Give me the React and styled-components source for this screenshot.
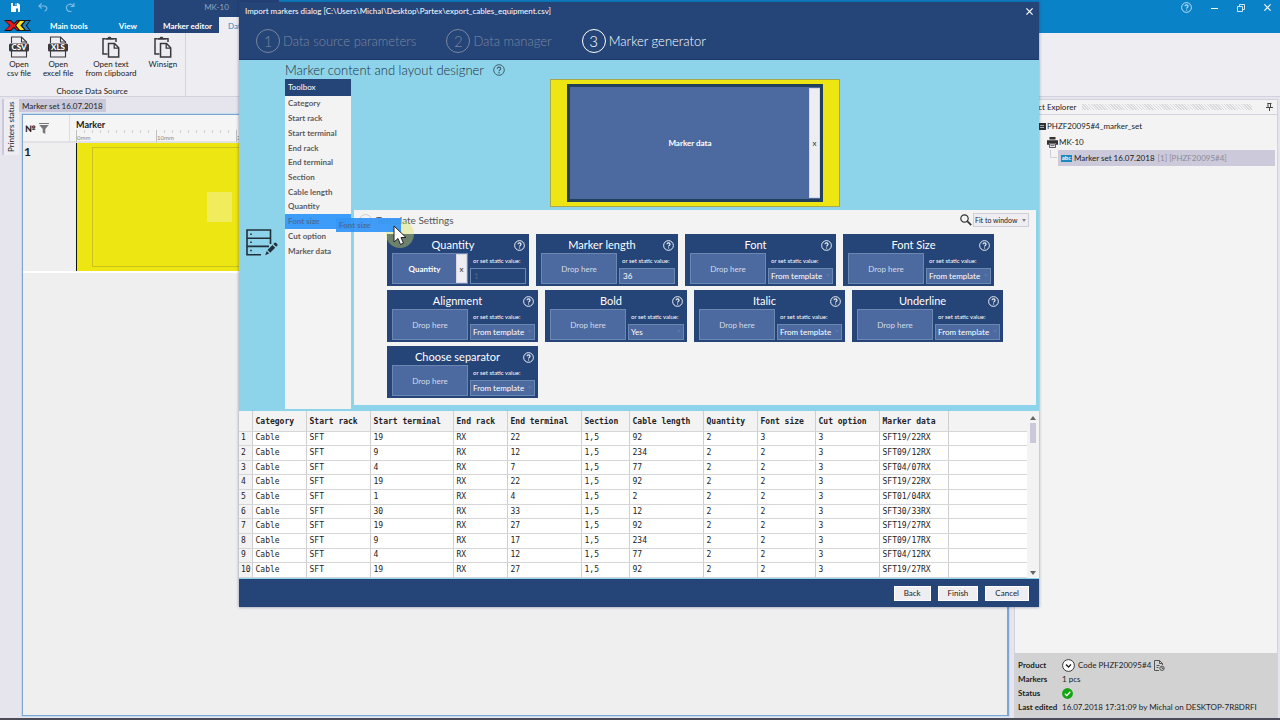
import React, { useState } from 'react';
import styled, { createGlobalStyle, css } from 'styled-components';

const TOOLBOX = [
    'Category', 'Start rack', 'Start terminal', 'End rack', 'End terminal', 'Section',
    'Cable length', 'Quantity', 'Font size', 'Cut option', 'Marker data',
];

const SETTINGS = [
    { title: 'Quantity', dropped: 'Quantity', input: '1', disabled: true },
    { title: 'Marker length', input: '36' },
    { title: 'Font', option: 'From template' },
    { title: 'Font Size', option: 'From template' },
    { title: 'Alignment', option: 'From template' },
    { title: 'Bold', option: 'Yes', narrow: true },
    { title: 'Italic', option: 'From template' },
    { title: 'Underline', option: 'From template' },
    { title: 'Choose separator', option: 'From template' },
];

const COLUMNS = [
    ['Category', 54], ['Start rack', 64], ['Start terminal', 83], ['End rack', 54],
    ['End terminal', 74], ['Section', 48], ['Cable length', 74], ['Quantity', 54],
    ['Font size', 58], ['Cut option', 64], ['Marker data', 69],
];

const ROWS = [
    ['Cable', 'SFT', '19', 'RX', '22', '1,5', '92', '2', '3', '3', 'SFT19/22RX'],
    ['Cable', 'SFT', '9', 'RX', '12', '1,5', '234', '2', '2', '3', 'SFT09/12RX'],
    ['Cable', 'SFT', '4', 'RX', '7', '1,5', '77', '2', '2', '3', 'SFT04/07RX'],
    ['Cable', 'SFT', '19', 'RX', '22', '1,5', '92', '2', '2', '3', 'SFT19/22RX'],
    ['Cable', 'SFT', '1', 'RX', '4', '1,5', '2', '2', '2', '3', 'SFT01/04RX'],
    ['Cable', 'SFT', '30', 'RX', '33', '1,5', '12', '2', '2', '3', 'SFT30/33RX'],
    ['Cable', 'SFT', '19', 'RX', '27', '1,5', '92', '2', '2', '3', 'SFT19/27RX'],
    ['Cable', 'SFT', '9', 'RX', '17', '1,5', '234', '2', '2', '3', 'SFT09/17RX'],
    ['Cable', 'SFT', '4', 'RX', '12', '1,5', '77', '2', '2', '3', 'SFT04/12RX'],
    ['Cable', 'SFT', '19', 'RX', '27', '1,5', '92', '2', '2', '3', 'SFT19/27RX'],
];

// ---------- ICONS ----------

const FileIcon = ({ text }) => (
    <svg width="20" height="22" viewBox="0 0 20 22" fill="none" stroke="#3a3a3e">
        <path d="M2.500 7V1h10l5 5v1M2.500 15v6h15v-6" strokeWidth="1.100" />
        <path d="M12.500 1v5h5" strokeWidth="1.100" />
        <rect x="0" y="7.500" width="20" height="8" rx="1.500" fill="#3a3a3e" stroke="none" />
        <text x="10" y="14.400" textAnchor="middle" fontSize="8" fontWeight="900" fill="#fff" stroke="none">{ text }</text>
    </svg>
);

const ClipboardIcon = () => (
    <svg width="20" height="22" viewBox="0 0 20 22" fill="none" stroke="#3a3a3e">
        <path d="M6.500 18H2V2.800h2.500M12 2.800h3V6" strokeWidth="1.500" />
        <path d="M4.500 3.800V2h2.200c0-1.700 3.600-1.700 3.600 0h2.200v1.800z" fill="#3a3a3e" stroke="none" />
        <path d="M7.500 7.500h6l4.200 4.200v9.300H7.500z" strokeWidth="1.500" fill="#eeedf2" />
        <path d="M13.200 7.800v4.300h4.300" strokeWidth="1.300" />
    </svg>
);

const Logo = () => (
    <svg width="27" height="11" viewBox="0 0 27 11">
        <path d="M0 0h7l3 3 3-3h7l-6 5.500 6 5.500h-7l-3-3-3 3H0l5.500-5.500z" fill="#140a10" />
        <path d="M1.500 1h5l3.500 3.300L13.300 1H15l-4 4.500 4 4.500h-2l-3-3.300L6.700 10H1.500l5-4.500z" fill="#e3171d" />
        <path d="M15 0h7l-5 5.500 5 5.500h-7l-4-5.500z" fill="#181818" />
        <path d="M16 1h4.500l-4.200 4.500 4.200 4.500H16l-3.800-4.500z" fill="#ffe51a" />
        <path d="M21 0h6l-4 5.500 4 5.500h-6l-4.200-5.500z" fill="#181818" />
        <path d="M21.800 1h3.500l-3.600 4.500 3.600 4.500h-3.500L18.300 5.500z" fill="#2184c4" />
    </svg>
);

const SaveIcon = () => (
    <svg width="10" height="9" viewBox="0 0 10 9">
        <path d="M0 0h7l2 2v7H0z" fill="#fff" />
        <path d="M2 0h4v3H2zM5 5.500h2V9H5z" fill="#0a82c8" />
        <path d="M4.500 0.500h1v2h-1z" fill="#fff" />
    </svg>
);

const UndoIcon = ({ flip }) => (
    <svg width="10" height="9" viewBox="0 0 10 9" fill="none" stroke="#79bbe2" strokeWidth="1.200">
        { flip
            ? <path d="M6.500 8.300A3.700 3.700 0 1 1 8.500 3.200M8.900 0v3.500H5.400" />
            : <path d="M3.600 .4L1 3l2.600 2.600M1 3h5.200c3.400 0 3.400 5 .3 5" /> }
    </svg>
);

const HelpIcon = ({ size = 11, color = '#fff' }) => (
    <svg width={ size } height={ size } viewBox="0 0 12 12" fill="none" stroke={ color }>
        <circle cx="6" cy="6" r="5.300" strokeWidth="1" />
        <path d="M4.400 4.700c0-2.200 3.300-2.100 3.300 0 0 1.200-1.600 1.200-1.600 2.500" strokeWidth="1.200" />
        <path d="M6.100 8.100v1.300" strokeWidth="1.200" />
    </svg>
);

const CloseIcon = () => (
    <svg width="7" height="7" viewBox="0 0 7 7" stroke="#fff" strokeWidth="1.200">
        <path d="M.4.4l6.200 6.200M6.600.4L.4 6.600" />
    </svg>
);

const FilterIcon = () => (
    <svg width="10" height="11" viewBox="0 0 10 11" fill="#77777a">
        <path d="M0 0h10v1H0zM.3 2h9.400L6.300 6v5L3.700 9.500V6z" />
    </svg>
);

const DatabaseIcon = () => (
    <svg width="32" height="27" viewBox="0 0 32 27" fill="none" stroke="#22303a" strokeWidth="1.600">
        <path d="M15 25.700H1V1h23.500v14M1 9.200h23.500M1 17.400h22" />
        <path d="M5 4.500v1.400M5 12.500v1.400M5 20.800v1.400" />
        <path d="M21.500 21l5-5 2.700 2.700-5 5z" fill="#22303a" stroke="none" />
        <path d="M27.400 15l1.500-1.500c.6-.6 3.300 2 2.700 2.700L30.100 17.700z" fill="#22303a" stroke="none" />
        <path d="M20.700 22l2.400 2.400-3.900 1.800z" fill="#22303a" stroke="none" />
    </svg>
);

const PrinterIcon = () => (
    <svg width="11" height="11" viewBox="0 0 11 11" fill="#333">
        <path d="M2.500 0h6v2.500h-6zM0 3.200h11v4.600H9V6.500H2v1.300H0z" />
        <path d="M2.500 7h6v3.500h-6z" fill="#fff" stroke="#333" strokeWidth=".8" />
        <path d="M3.500 8.700h4" stroke="#333" strokeWidth=".8" />
    </svg>
);

// ---------- APP ----------

const SettingCard = ({ title, dropped, input, option, disabled, narrow }) => {
    const [value, setValue] = useState(input || '');
    const id = `static-${ title.toLowerCase().replace(' ', '-') }`;

    return (
        <Card $narrow={ narrow || input !== undefined }>
            <CardHead>
                <CardTitle>{ title }</CardTitle>
                <IconButton type="button" aria-label={ `Help: ${ title }` }><HelpIcon /></IconButton>
            </CardHead>
            <CardBody>
                <DropZone $filled={ !!dropped }>
                    <span>{ dropped || 'Drop here' }</span>
                    { dropped && <RemoveButton type="button" aria-label={ `Remove ${ dropped }` }>x</RemoveButton> }
                </DropZone>
                <Static>
                    <StaticLabel htmlFor={ id }>or set static value:</StaticLabel>
                    { option
                        ? (
                            <SelectWrap>
                                <StaticSelect id={ id } defaultValue={ option }><option>{ option }</option></StaticSelect>
                                <Arrow $color="#5b76a6" />
                            </SelectWrap>
                        )
                        : <StaticInput id={ id } value={ value } disabled={ disabled } onChange={ (e) => setValue(e.target.value) } /> }
                </Static>
            </CardBody>
        </Card>
    );
};

const ImportDialog = () => (
    <Dialog role="dialog" aria-label="Import markers dialog">
        <DialogTop>
            <DialogTitle>
                <span>Import markers dialog [C:\Users\Michal\Desktop\Partex\export_cables_equipment.csv]</span>
                <IconButton type="button" aria-label="Close dialog"><CloseIcon /></IconButton>
            </DialogTitle>
            <Steps>
                { ['Data source parameters', 'Data manager', 'Marker generator'].map((step, i) => (
                    <Step key={ step } $active={ i === 2 }><StepNumber>{ i + 1 }</StepNumber>{ step }</Step>
                )) }
            </Steps>
        </DialogTop>
        <DialogBody>
            <BodyTitle>Marker content and layout designer <HelpIcon size={ 12 } color="#3f6272" /></BodyTitle>
            <BodyIcon><DatabaseIcon /></BodyIcon>
            <Toolbox>
                <ToolboxTitle>Toolbox</ToolboxTitle>
                <ToolboxList>
                    { TOOLBOX.map((item) => <ToolboxItem key={ item } $selected={ item === 'Font size' }>{ item }</ToolboxItem>) }
                </ToolboxList>
            </Toolbox>
            <Designer>
                <Preview>
                    <PreviewField>
                        <span>Marker data</span>
                        <RemoveButton type="button" aria-label="Remove Marker data">x</RemoveButton>
                    </PreviewField>
                </Preview>
                <Panel>
                    <PanelHead>
                        <svg width="13" height="13" viewBox="0 0 13 13" fill="none" stroke="#ccc">
                            <circle cx="6.500" cy="6.500" r="6" /><path d="M4 7.500l2.500-2.500L9 7.500" />
                        </svg>
                        <PanelTitle>Template Settings</PanelTitle>
                        <svg width="12" height="12" viewBox="0 0 12 12" fill="none" stroke="#333" strokeWidth="1.200">
                            <circle cx="4.500" cy="4.500" r="3.700" /><path d="M7.200 7.200l4 4" strokeWidth="1.700" />
                        </svg>
                        <ZoomWrap>
                            <ZoomSelect aria-label="Zoom" defaultValue="Fit to window"><option>Fit to window</option></ZoomSelect>
                            <Arrow $color="#888" />
                        </ZoomWrap>
                    </PanelHead>
                    <Cards>
                        { SETTINGS.map((s) => <SettingCard key={ s.title } { ...s } />) }
                    </Cards>
                </Panel>
            </Designer>
            <Halo />
            <DragGhost>Font size</DragGhost>
            <Cursor width="14" height="21" viewBox="0 0 14 21">
                <path d="M1 1v16l4-3.500 2.500 6 3-1.300L8 12.500h5z" fill="#fff" stroke="#222" />
            </Cursor>
        </DialogBody>
        <GridArea>
            <Table>
                <colgroup>
                    <Col $width={ 13 } />
                    { COLUMNS.map(([name, width]) => <Col key={ name } $width={ width } />) }
                    <col />
                </colgroup>
                <thead>
                    <tr>
                        <Th />
                        { COLUMNS.map(([name]) => <Th key={ name }>{ name }</Th>) }
                        <Th />
                    </tr>
                </thead>
                <tbody>
                    { ROWS.map((row, i) => (
                        <tr key={ i }>
                            <RowNumber>{ i + 1 }</RowNumber>
                            { row.map((cell, j) => <Td key={ j }>{ cell }</Td>) }
                            <Td />
                        </tr>
                    )) }
                </tbody>
            </Table>
            <Scrollbar>
                <Arrow $up $color="#666" $static />
                <Thumb />
                <Arrow $color="#666" $static />
            </Scrollbar>
        </GridArea>
        <DialogFooter>
            <FooterButton type="button">Back</FooterButton>
            <FooterButton type="button">Finish</FooterButton>
            <FooterButton type="button">Cancel</FooterButton>
        </DialogFooter>
    </Dialog>
);

const App = () => (
    <Shell>
        <GlobalStyle />
        <TitleBar>
            <MainTabs>
                <QuickAccess><SaveIcon /><UndoIcon /><UndoIcon flip /></QuickAccess>
                <TabRow><Logo /><TabButton>Main tools</TabButton><TabButton>View</TabButton></TabRow>
            </MainTabs>
            <ContextTabs>
                <ContextName>MK-10</ContextName>
                <ContextRow><TabButton>Marker editor</TabButton><TabButton $active>Data</TabButton></ContextRow>
            </ContextTabs>
            <WindowButtons>
                <IconButton type="button" aria-label="Help"><HelpIcon color="#cfe8f7" /></IconButton>
                <IconButton type="button" aria-label="Minimize"><svg width="7" height="7" stroke="#fff"><path d="M0 4.500h7" /></svg></IconButton>
                <IconButton type="button" aria-label="Restore">
                    <svg width="8" height="8" fill="none" stroke="#cfe8f7"><path d="M.5 2.500h5v5h-5zM2.500 2V.5h5v5H6" /></svg>
                </IconButton>
                <IconButton type="button" aria-label="Close"><CloseIcon /></IconButton>
            </WindowButtons>
        </TitleBar>
        <Ribbon>
            <RibbonGroup>
                <RibbonButtons>
                    <RibbonButton><FileIcon text="CSV" />Open<br />csv file</RibbonButton>
                    <RibbonButton><FileIcon text="XLS" />Open<br />excel file</RibbonButton>
                    <RibbonButton><ClipboardIcon />Open text<br />from clipboard</RibbonButton>
                    <RibbonButton><ClipboardIcon />Winsign</RibbonButton>
                </RibbonButtons>
                <GroupName>Choose Data Source</GroupName>
            </RibbonGroup>
        </Ribbon>
        <Workspace>
            <SideStrip><SideTab>Printers status</SideTab></SideStrip>
            <DocumentArea>
                <DocumentTab>Marker set 16.07.2018</DocumentTab>
                <Document>
                    <DocHead>
                        <DocNumber>№ <FilterIcon /></DocNumber>
                        <DocColumn>
                            Marker
                            <svg width="100%" height="13">
                                <defs>
                                    <pattern id="mm" width="8" height="13" patternUnits="userSpaceOnUse"><path d="M.5 0v3" stroke="#d0d0d2" /></pattern>
                                    <pattern id="cm" width="80" height="13" patternUnits="userSpaceOnUse"><path d="M.5 0v12" stroke="#c0c0c2" /></pattern>
                                </defs>
                                <rect width="100%" height="13" fill="url(#mm)" />
                                <rect width="100%" height="13" fill="url(#cm)" />
                                { [0, 1, 2].map((n) => <text key={ n } x={ n * 80 + 1 } y="10" fontSize="6" fontWeight="400" fill="#888">{ n * 10 }mm</text>) }
                            </svg>
                        </DocColumn>
                    </DocHead>
                    <DocRow>
                        <RowIndex>1</RowIndex>
                        <MarkerStrip><MarkerOutline><MarkerGap /></MarkerOutline></MarkerStrip>
                    </DocRow>
                </Document>
            </DocumentArea>
            <Explorer>
                <ExplorerHead>
                    Project Explorer
                    <Grip />
                    <svg width="7" height="8" viewBox="0 0 7 8" fill="none" stroke="#444"><path d="M1.500.5h4M2 0v4.500M4.500 0v4.500M0 4.500h7M3.500 5v3" /></svg>
                </ExplorerHead>
                <Tree>
                    <TreeRow $level={ 0 }>
                        <svg width="7" height="7"><rect width="7" height="7" fill="#333" /><path d="M1 2.500h4M1 4.500h4" stroke="#aaa" /></svg>
                        PHZF20095#4_marker_set
                    </TreeRow>
                    <TreeRow $level={ 1 }><PrinterIcon />MK-10</TreeRow>
                    <TreeBranch>
                        <svg width="8" height="9" fill="none" stroke="#cfcfd4"><path d="M.5 0v7.500H7" /></svg>
                        <TreeRow $selected><AbcBadge>abc</AbcBadge>Marker set 16.07.2018 <em>[1] [PHZF20095#4]</em></TreeRow>
                    </TreeBranch>
                </Tree>
                <Details>
                    <dt>Product</dt>
                    <dd>
                        <svg width="13" height="13" viewBox="0 0 13 13" fill="none"><circle cx="6.500" cy="6.500" r="5.900" fill="#fff" stroke="#333" /><path d="M4 5.500L6.500 8 9 5.500" stroke="#222" strokeWidth="1.400" /></svg>
                        Code PHZF20095#4
                        <svg width="11" height="11" viewBox="0 0 11 11" fill="none" stroke="#555"><path d="M5 10.500H.5V.5h5l3 3V5M5.500.5v3h3M2.500 5.500h3M2.500 7.500h2" /><circle cx="8" cy="8.300" r="2.200" /><path d="M8 7v1.500h1.500" /></svg>
                    </dd>
                    <dt>Markers</dt>
                    <dd>1 pcs</dd>
                    <dt>Status</dt>
                    <dd><svg width="11" height="11" viewBox="0 0 11 11"><circle cx="5.500" cy="5.500" r="5.400" fill="#12a512" /><path d="M2.800 5.600l2 2 3.500-3.800" fill="none" stroke="#fff" strokeWidth="1.300" /></svg></dd>
                    <dt>Last edited</dt>
                    <dd>16.07.2018 17:31:09 by Michal on DESKTOP-7R8DRFI</dd>
                </Details>
            </Explorer>
        </Workspace>
        <Overlay><ImportDialog /></Overlay>
    </Shell>
);

// ---------- STYLES ----------

const GlobalStyle = createGlobalStyle`
    * {
        box-sizing: border-box;
    }

    body {
        margin: 0;
        font-family: Lato, "Open Sans", sans-serif;
        font-size: 8px;
        color: #222;
    }

    button, input, select {
        font: inherit;
        color: inherit;
        margin: 0;
    }

    svg {
        flex: none;
    }
`;

const Shell = styled.div`
    position: relative;
    display: flex;
    flex-direction: column;
    min-height: 100vh;
    background: #e6e5ee;
    border-bottom: 2px solid #4b4c58;
`;

const IconButton = styled.button`
    display: flex;
    align-items: center;
    padding: 0;
    border: none;
    background: none;
    cursor: pointer;
`;

const TitleBar = styled.header`
    display: flex;
    height: 33px;
    background: #0a82c8;
    color: #fff;
`;

const MainTabs = styled.div`
    width: 154px;
    display: flex;
    flex-direction: column;
    justify-content: space-between;
`;

const QuickAccess = styled.div`
    display: flex;
    gap: 17px;
    padding: 3px 11px;
`;

const TabRow = styled.div`
    display: flex;
    align-items: center;
    gap: 19px;
    height: 16px;
    padding-left: 4px;
`;

const TabButton = styled.button`
    height: 16px;
    padding: 2px 0 0;
    border: none;
    background: none;
    font-weight: 700;
    white-space: nowrap;

    & + & {
        margin-left: 12px;
    }

    ${ (p) => p.$active && css`
        && {
            margin-left: 0;
            padding: 2px 9px 0;
            background: #eeedf2;
            color: #2f8cc4;
            font-weight: 400;
        }
    ` }
`;

const ContextTabs = styled.div`
    width: 125px;
    display: flex;
    flex-direction: column;
    justify-content: space-between;
    background: #254478;
`;

const ContextName = styled.div`
    padding-top: 2px;
    line-height: 11px;
    text-align: center;
    color: #93a3bd;
`;

const ContextRow = styled.div`
    display: flex;
    gap: 7px;
    padding-left: 9px;
`;

const WindowButtons = styled.div`
    flex: 1;
    display: flex;
    justify-content: flex-end;
    align-items: center;
    gap: 19px;
    height: 15px;
    padding-right: 9px;
`;

const Ribbon = styled.div`
    display: flex;
    height: 64px;
    background: #eeedf2;
    border-bottom: 1px solid #d2d1de;
`;

const RibbonGroup = styled.div`
    display: flex;
    flex-direction: column;
    justify-content: space-between;
    padding: 3px 8px 0 7px;
    border-right: 1px solid #d2d1de;
`;

const RibbonButtons = styled.div`
    display: flex;
    align-items: flex-start;
    gap: 12px;
`;

const RibbonButton = styled.button`
    display: block;
    padding: 0;
    border: none;
    background: none;
    line-height: 9px;
    text-align: center;

    svg {
        display: block;
        margin: 0 auto 2px;
    }
`;

const GroupName = styled.div`
    line-height: 9px;
    text-align: center;
`;

const Workspace = styled.main`
    flex: 1;
    display: flex;
    padding: 2px 2px 0 0;
`;

const SideStrip = styled.div`
    width: 19px;
    padding-left: 2px;
`;

const SideTab = styled.button`
    height: 56px;
    padding: 0 1px 0 2px;
    border: none;
    border-right: 2px solid #cac8da;
    background: #eeedf2;
    line-height: 12px;
    writing-mode: vertical-rl;
    transform: rotate(180deg);
`;

const DocumentArea = styled.div`
    flex: 1;
    display: flex;
    flex-direction: column;
    align-items: flex-start;
`;

const DocumentTab = styled.button`
    height: 13px;
    padding: 0 3px;
    border: none;
    background: #cac8da;
    line-height: 14px;
`;

const Document = styled.section`
    flex: 1;
    align-self: stretch;
    margin: 2px 5px 2px 3px;
    border: 1px solid #7ba6d2;
    border-right-width: 2px;
    outline: 1px solid #c6ddf0;
    background: #efefef;
`;

const DocHead = styled.div`
    display: flex;
    height: 28px;
    background: #f5f5f6;
    border-bottom: 2px solid #e2e2e6;
`;

const DocNumber = styled.div`
    display: flex;
    align-items: center;
    gap: 3px;
    width: 47px;
    padding-left: 2px;
    border-right: 1px solid #dcdce2;
    font-size: 9px;
    font-weight: 900;
`;

const DocColumn = styled.div`
    flex: 1;
    display: flex;
    flex-direction: column;
    padding: 4px 0 0 6px;
    font-size: 9px;
    font-weight: 700;
    line-height: 11px;
`;

const DocRow = styled.div`
    display: flex;
    height: 130px;
    border-bottom: 2px solid #fff;
`;

const RowIndex = styled.div`
    width: 53px;
    padding: 1px;
    font-size: 12px;
    font-weight: 700;
`;

const MarkerStrip = styled.div`
    width: 320px;
    padding: 4px 15px;
    border-left: 1px solid #111;
    background: #eee612;
`;

const MarkerOutline = styled.div`
    height: 120px;
    padding: 44px 114px;
    border: 1px solid #c9c31c;
`;

const MarkerGap = styled.div`
    width: 25px;
    height: 30px;
    background: #f1ec5c;
`;

const Explorer = styled.aside`
    width: 264px;
    display: flex;
    flex-direction: column;
    border: 1px solid #d2d1de;
    background: #f3f3f4;
`;

const ExplorerHead = styled.div`
    display: flex;
    align-items: center;
    gap: 6px;
    height: 15px;
    padding: 0 4px 0 5px;
    border-bottom: 1px solid #d2d1de;
`;

const Grip = styled.div`
    flex: 1;
    height: 6px;
    margin-right: 8px;
    background: repeating-linear-gradient(45deg, #dadadd 0, #dadadd 1px, transparent 1px, transparent 2px);
`;

const Tree = styled.div`
    flex: 1;
    padding: 3px 2px 0 24px;
`;

const TreeRow = styled.div`
    flex: 1;
    display: flex;
    align-items: center;
    gap: 1px;
    height: 16px;
    margin-left: ${ (p) => (p.$level ? 8 : 0) }px;
    background: ${ (p) => (p.$selected ? '#cbc9da' : 'none') };
    padding-left: ${ (p) => (p.$selected ? 3 : 0) }px;
    white-space: pre;

    em {
        font-style: normal;
        color: #8c8b98;
    }
`;

const TreeBranch = styled.div`
    display: flex;
    padding-left: 11px;
`;

const AbcBadge = styled.span`
    width: 11px;
    height: 7px;
    margin-right: 1px;
    background: #1a8bc0;
    color: #fff;
    font-size: 6px;
    font-weight: 700;
    line-height: 6px;
    text-align: center;
`;

const Details = styled.dl`
    display: grid;
    grid-template-columns: 44px 1fr;
    align-items: center;
    margin: 0;
    padding: 5px 3px 3px;
    background: #d2d2d2;
    line-height: 14px;

    dt {
        font-weight: 700;
    }

    dd {
        display: flex;
        align-items: center;
        gap: 3px;
        margin: 0;
    }
`;

const Overlay = styled.div`
    position: absolute;
    inset: 2px 2px auto 0;
    display: flex;
    justify-content: center;
`;

const Dialog = styled.section`
    width: 800px;
    max-width: 100%;
    box-shadow: 0 0 3px rgba(30, 40, 80, 0.5);
`;

const DialogTop = styled.div`
    height: 58px;
    background: #254478;
    border-bottom: 1px solid #1c3866;
    color: #fff;
`;

const DialogTitle = styled.div`
    display: flex;
    justify-content: space-between;
    align-items: center;
    height: 18px;
    padding: 0 6px;
`;

const Steps = styled.div`
    display: flex;
    gap: 30px;
    padding: 9px 0 0 17px;
`;

const Step = styled.div`
    display: flex;
    align-items: center;
    gap: 3px;
    font-size: 13px;
    font-weight: 300;
    color: ${ (p) => (p.$active ? '#fff' : '#7b879f') };
`;

const StepNumber = styled.span`
    width: 24px;
    height: 24px;
    border: 1px solid currentColor;
    border-radius: 50%;
    font-size: 15px;
    line-height: 22px;
    text-align: center;
`;

const DialogBody = styled.div`
    position: relative;
    display: grid;
    grid-template-columns: 46px 66px 1fr;
    grid-template-rows: 19px auto;
    padding: 0 3px 2px 0;
    background: #8dd3ea;
`;

const BodyTitle = styled.h1`
    grid-column: 2 / -1;
    display: flex;
    align-items: center;
    gap: 9px;
    margin: 0;
    font-size: 13px;
    font-weight: 300;
    color: #24323c;
`;

const BodyIcon = styled.div`
    display: grid;
    place-items: center;
    padding-bottom: 3px;
`;

const Toolbox = styled.div`
    background: #f3f3f4;
`;

const ToolboxTitle = styled.div`
    height: 17px;
    padding-left: 3px;
    background: #254478;
    color: #fff;
    line-height: 17px;
`;

const ToolboxList = styled.ul`
    display: grid;
    grid-auto-rows: 1fr;
    height: 162px;
    margin: 0;
    padding: 0;
    list-style: none;
`;

const ToolboxItem = styled.li`
    display: flex;
    align-items: center;
    padding-left: 3px;
    background: ${ (p) => (p.$selected ? '#3b9cfa' : 'none') };
    color: ${ (p) => (p.$selected ? '#4b6e9d' : '#5c5c60') };
    font-weight: 700;
`;

const Designer = styled.div`
    display: flex;
    flex-direction: column;
    gap: 3px;
    padding: 0 0 4px 3px;
`;

const Preview = styled.div`
    align-self: center;
    width: 290px;
    padding: 4px 16px;
    border: 1px solid #a8a84a;
    background: #eee612;
`;

const PreviewField = styled.div`
    display: flex;
    align-items: center;
    height: 118px;
    padding: 1px 0 1px 1px;
    border: 3px solid #22405c;
    background: #4c6a9f;
    color: #fff;
    font-weight: 700;

    span {
        flex: 1;
        text-align: center;
    }
`;

const RemoveButton = styled.button`
    align-self: stretch;
    width: 11px;
    padding: 0;
    border: 1px solid #d8d8e4;
    background: #eeedf2;
    color: #333;
    font-weight: 400;
    text-align: center;
`;

const Panel = styled.div`
    flex: 1;
    padding-bottom: 7px;
    background: #f3f3f4;
`;

const PanelHead = styled.div`
    display: flex;
    align-items: center;
    height: 24px;
    padding: 0 7px 4px 5px;
`;

const PanelTitle = styled.h2`
    flex: 1;
    margin: 0 0 0 4px;
    font-size: 10px;
    font-weight: 400;
    color: #555;
`;

const Cards = styled.div`
    display: flex;
    flex-wrap: wrap;
    gap: 4px 7px;
    padding-left: 33px;
`;

const Card = styled.section`
    width: ${ (p) => (p.$narrow ? 142 : 151) }px;
    height: 52px;
    padding: 0 3px 3px 5px;
    background: #254478;
    color: #fff;
`;

const CardHead = styled.div`
    display: flex;
    align-items: center;
    height: 19px;
    padding: 3px 1px 0 0;
`;

const CardTitle = styled.h3`
    flex: 1;
    margin: 0;
    font-size: 11px;
    font-weight: 400;
    line-height: 14px;
    text-align: center;
`;

const CardBody = styled.div`
    display: flex;
    gap: 2px;
    height: 31px;
`;

const DropZone = styled.div`
    display: flex;
    align-items: center;
    width: 76px;
    border: 1px solid #6d87b3;
    background: #4c6a9f;
    color: ${ (p) => (p.$filled ? '#fff' : '#d3dbe9') };
    font-weight: ${ (p) => (p.$filled ? 700 : 400) };

    span {
        flex: 1;
        text-align: center;
    }
`;

const Static = styled.div`
    flex: 1;
    display: flex;
    flex-direction: column;
    justify-content: space-between;
    min-width: 0;
`;

const StaticLabel = styled.label`
    font-size: 6px;
    line-height: 15px;
    padding-left: 3px;
    white-space: nowrap;
`;

const fieldLook = css`
    width: 100%;
    height: 16px;
    border: 1px solid #6d87b3;
    border-radius: 0;
    background: #4c6a9f;
    line-height: 14px;
`;

const StaticInput = styled.input`
    ${ fieldLook }
    padding: 0 3px;

    &:disabled {
        background: #254478;
        color: #4c6490;
    }
`;

const SelectWrap = styled.div`
    position: relative;
`;

const StaticSelect = styled.select`
    ${ fieldLook }
    display: block;
    padding: 0 2px;
    appearance: none;
`;

const ZoomWrap = styled(SelectWrap)`
    margin-left: 1px;
`;

const ZoomSelect = styled.select`
    display: block;
    width: 56px;
    height: 14px;
    padding: 0 1px;
    border: 1px solid #cfcedb;
    border-radius: 0;
    background: #eeedf2;
    appearance: none;
    font-size: 7px;
`;

const Arrow = styled.i`
    ${ (p) => !p.$static && css`
        position: absolute;
        top: 6px;
        right: 3px;
    ` }
    border: solid transparent;
    border-width: ${ (p) => (p.$static ? (p.$up ? '0 3px 4px' : '4px 3px 0') : '3px 2px 0') };
    border-${ (p) => (p.$up ? 'bottom' : 'top') }-color: ${ (p) => p.$color };
    pointer-events: none;
`;

const Halo = styled.div`
    position: absolute;
    top: 160px;
    left: 147px;
    width: 28px;
    height: 28px;
    border-radius: 50%;
    background: rgba(214, 224, 90, 0.4);
`;

const DragGhost = styled.div`
    position: absolute;
    top: 158px;
    left: 97px;
    width: 65px;
    padding-left: 3px;
    background: rgba(52, 150, 246, 0.94);
    color: #4b6e9d;
    font-weight: 700;
    line-height: 14px;
`;

const Cursor = styled.svg`
    position: absolute;
    top: 165px;
    left: 154px;
`;

const GridArea = styled.div`
    display: flex;
    height: 168px;
    background: #f3f3f4;
    border-bottom: 1px solid #8dd3ea;
`;

const Table = styled.table`
    flex: 1;
    table-layout: fixed;
    width: 0;
    height: 167px;
    border-collapse: collapse;
    background: #fff;
    font-family: "DejaVu Sans Mono", monospace;
`;

const Col = styled.col`
    width: ${ (p) => p.$width }px;
`;

const Th = styled.th`
    height: 20px;
    padding: 1px 0 0 3px;
    border-right: 1px solid #cfcfd2;
    border-bottom: 1px solid #d6d6d8;
    background: #f3f3f4;
    text-align: left;
    white-space: nowrap;

    &:last-child {
        border-right: none;
    }
`;

const Td = styled.td`
    padding: 0 0 0 3px;
    border-right: 1px solid #cfcfd2;
    border-bottom: 1px solid #d6d6d8;
    line-height: 10px;

    &:last-child {
        border-right: none;
    }
`;

const RowNumber = styled(Td)`
    padding-left: 2px;
    background: #f3f3f4;
`;

const Scrollbar = styled.div`
    display: flex;
    flex-direction: column;
    align-items: center;
    width: 12px;
    padding: 5px 0 3px;
`;

const Thumb = styled.div`
    width: 6px;
    height: 20px;
    margin: 3px 0 auto;
    background: #cac8da;
`;

const DialogFooter = styled.footer`
    display: flex;
    justify-content: flex-end;
    align-items: center;
    gap: 7px;
    height: 28px;
    padding-right: 10px;
    background: #254478;
`;

const FooterButton = styled.button`
    height: 15px;
    padding: 0 9px;
    border: 1px solid #fff;
    background: #eeedf2;
    line-height: 13px;
`;

export default App;
